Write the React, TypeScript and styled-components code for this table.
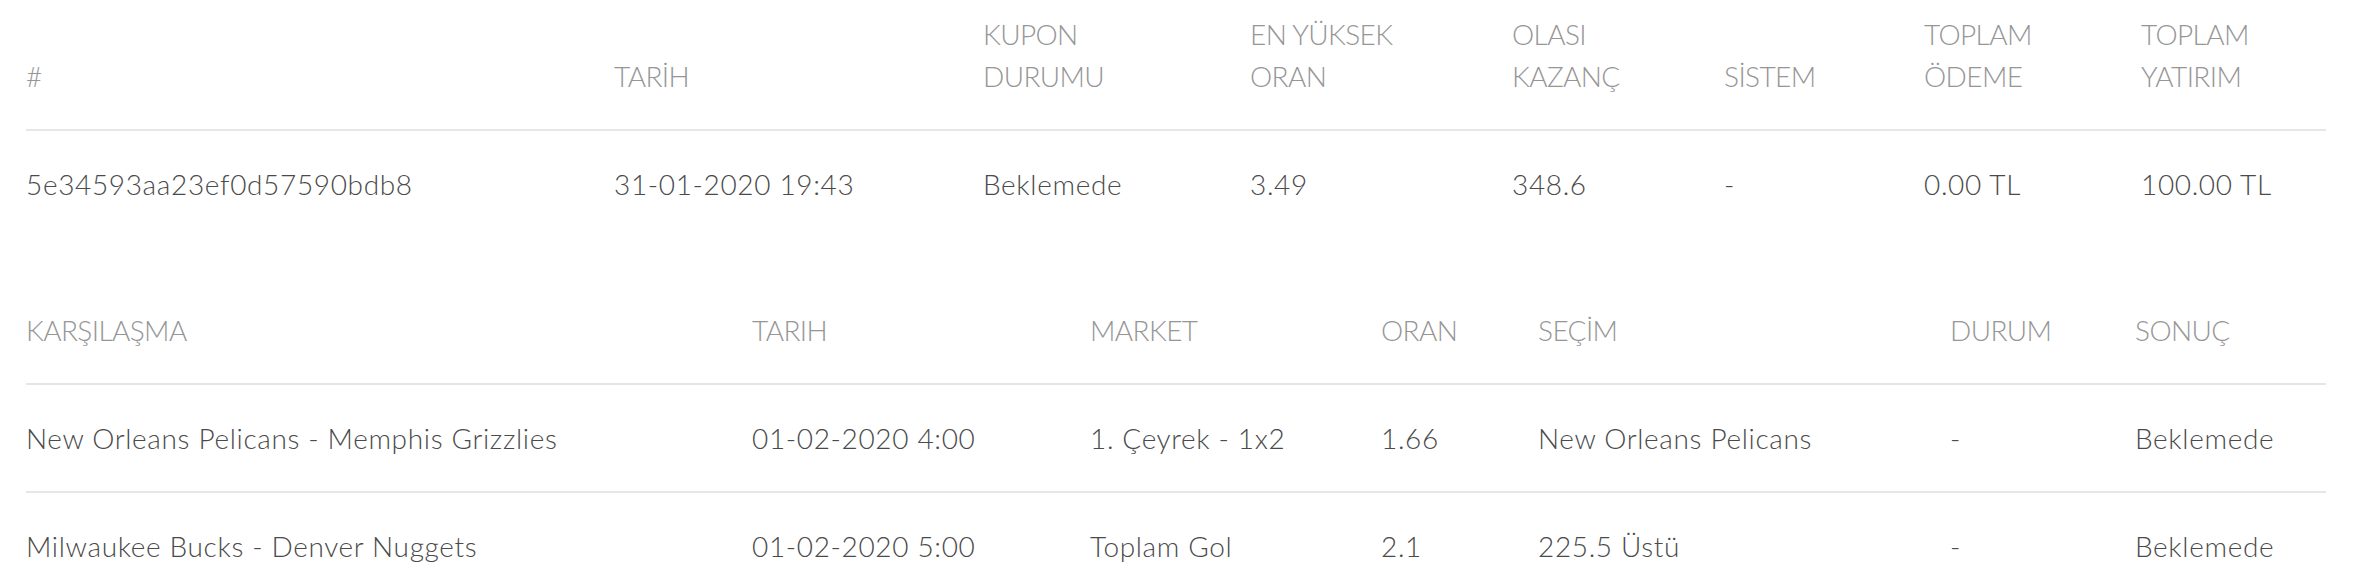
import React from "react";
import styled, { createGlobalStyle } from "styled-components";

const GlobalStyle = createGlobalStyle`
  html, body {
    margin: 0;
    padding: 0;
    background: #ffffff;
  }
  body {
    font-family: Lato, "Noto Sans", "Liberation Sans", sans-serif;
  }
`;

const Page = styled.div`
  padding-left: 26px;
  width: 2300px;
`;

const DataTable = styled.table<{ $gap?: number }>`
  width: 2300px;
  table-layout: fixed;
  border-collapse: collapse;
  border-spacing: 0;
  margin-top: ${(p) => p.$gap ?? 0}px;
`;

const HeadCell = styled.th<{ $top: number }>`
  text-align: left;
  vertical-align: bottom;
  padding: ${(p) => p.$top}px 0 32px 0;
  font-size: 28px;
  line-height: 42px;
  font-weight: 300;
  letter-spacing: -0.6px;
  color: #969696;
  border-bottom: 2px solid #e6e6e6;
  white-space: nowrap;
`;

const BodyCell = styled.td<{ $ruled?: boolean }>`
  text-align: left;
  vertical-align: middle;
  padding: 32px 0;
  font-size: 28px;
  line-height: 42px;
  font-weight: 300;
  letter-spacing: 0.65px;
  color: #4a4a4a;
  white-space: nowrap;
  border-bottom: ${(p) => (p.$ruled ? "2px solid #e6e6e6" : "none")};
`;

type Head = { lines: string[]; width: number };

const couponHeads: Head[] = [
  { lines: ["#"], width: 588 },
  { lines: ["TARİH"], width: 369 },
  { lines: ["KUPON", "DURUMU"], width: 267 },
  { lines: ["EN YÜKSEK", "ORAN"], width: 262 },
  { lines: ["OLASI", "KAZANÇ"], width: 212 },
  { lines: ["SİSTEM"], width: 200 },
  { lines: ["TOPLAM", "ÖDEME"], width: 217 },
  { lines: ["TOPLAM", "YATIRIM"], width: 185 },
];

const couponRow = [
  "5e34593aa23ef0d57590bdb8",
  "31-01-2020 19:43",
  "Beklemede",
  "3.49",
  "348.6",
  "-",
  "0.00 TL",
  "100.00 TL",
];

const matchHeads: Head[] = [
  { lines: ["KARŞILAŞMA"], width: 726 },
  { lines: ["TARIH"], width: 338 },
  { lines: ["MARKET"], width: 291 },
  { lines: ["ORAN"], width: 157 },
  { lines: ["SEÇİM"], width: 412 },
  { lines: ["DURUM"], width: 185 },
  { lines: ["SONUÇ"], width: 191 },
];

const matchRows = [
  [
    "New Orleans Pelicans - Memphis Grizzlies",
    "01-02-2020 4:00",
    "1. Çeyrek - 1x2",
    "1.66",
    "New Orleans Pelicans",
    "-",
    "Beklemede",
  ],
  [
    "Milwaukee Bucks - Denver Nuggets",
    "01-02-2020 5:00",
    "Toplam Gol",
    "2.1",
    "225.5 Üstü",
    "-",
    "Beklemede",
  ],
];

function Columns({ heads }: { heads: Head[] }) {
  return (
    <colgroup>
      {heads.map((h, i) => (
        <col key={i} style={{ width: h.width }} />
      ))}
    </colgroup>
  );
}

function HeadRow({ heads, top }: { heads: Head[]; top: number }) {
  return (
    <thead>
      <tr>
        {heads.map((h, i) => (
          <HeadCell key={i} $top={top}>
            {h.lines.map((l, j) => (
              <React.Fragment key={j}>
                {j > 0 && <br />}
                {l}
              </React.Fragment>
            ))}
          </HeadCell>
        ))}
      </tr>
    </thead>
  );
}

export default function App() {
  return (
    <>
      <GlobalStyle />
      <Page>
        <DataTable>
          <Columns heads={couponHeads} />
          <HeadRow heads={couponHeads} top={13} />
          <tbody>
            <tr>
              {couponRow.map((c, i) => (
                <BodyCell key={i}>{c}</BodyCell>
              ))}
            </tr>
          </tbody>
        </DataTable>
        <DataTable $gap={40}>
          <Columns heads={matchHeads} />
          <HeadRow heads={matchHeads} top={32} />
          <tbody>
            {matchRows.map((r, ri) => (
              <tr key={ri}>
                {r.map((c, i) => (
                  <BodyCell key={i} $ruled>
                    {c}
                  </BodyCell>
                ))}
              </tr>
            ))}
          </tbody>
        </DataTable>
      </Page>
    </>
  );
}
